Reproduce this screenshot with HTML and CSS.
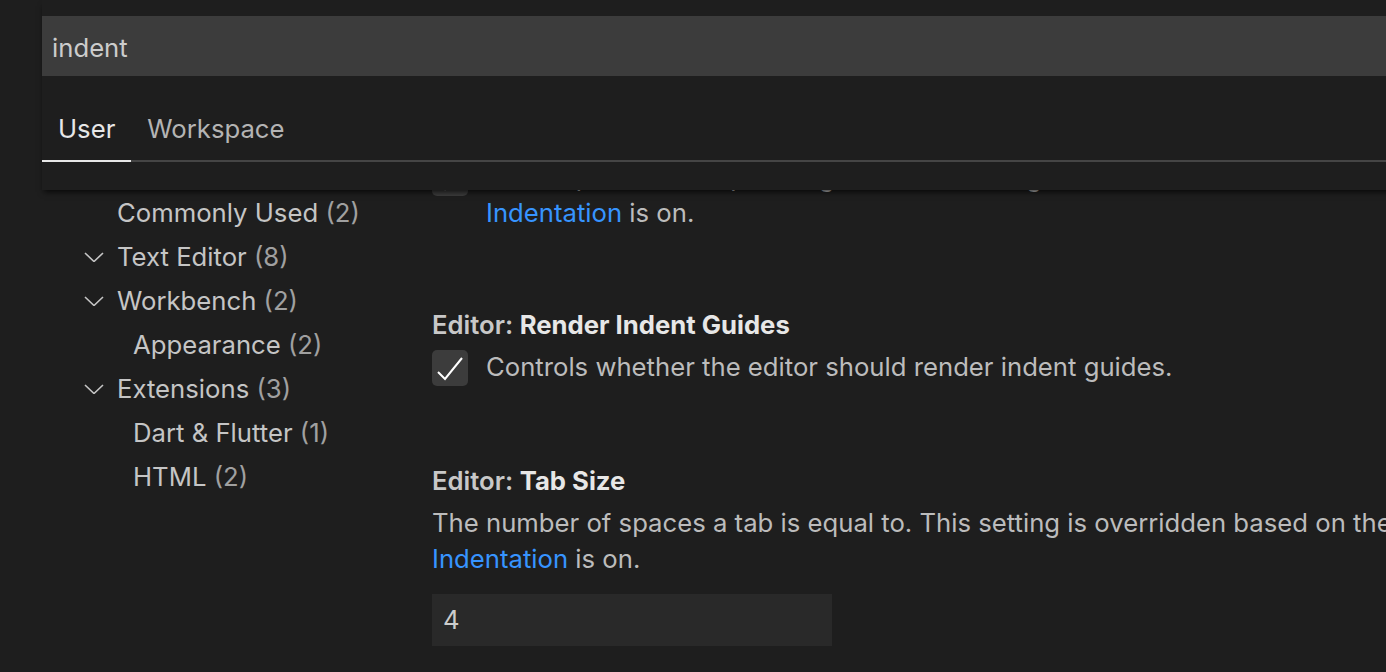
FILE: index.html
```html
<!DOCTYPE html>
<html lang="en">
  <head>
    <meta charset="UTF-8" />
    <meta name="viewport" content="width=device-width, initial-scale=1.0" />
    <title>Settings</title>
    <link rel="stylesheet" href="styles.css">
  </head>
  <body>
    <div class="settings">
      <div class="header">
        <div class="search">indent</div>
        <div class="tabs">
          <span class="tab active">User</span>
          <span class="tab">Workspace</span>
        </div>
      </div>

      <div class="body">
        <nav class="toc">
          <div class="toc-row lvl0">
            <span class="label">Commonly Used <span class="count">(2)</span></span>
          </div>
          <div class="toc-row lvl1">
            <svg class="chevron" viewBox="0 0 20 10"><path d="M1 1 L10 9.5 L19 1" /></svg>
            <span class="label">Text Editor <span class="count">(8)</span></span>
          </div>
          <div class="toc-row lvl1">
            <svg class="chevron" viewBox="0 0 20 10"><path d="M1 1 L10 9.5 L19 1" /></svg>
            <span class="label">Workbench <span class="count">(2)</span></span>
          </div>
          <div class="toc-row lvl2">
            <span class="label">Appearance <span class="count">(2)</span></span>
          </div>
          <div class="toc-row lvl1">
            <svg class="chevron" viewBox="0 0 20 10"><path d="M1 1 L10 9.5 L19 1" /></svg>
            <span class="label">Extensions <span class="count">(3)</span></span>
          </div>
          <div class="toc-row lvl2">
            <span class="label">Dart &amp; Flutter <span class="count">(1)</span></span>
          </div>
          <div class="toc-row lvl2">
            <span class="label">HTML <span class="count">(2)</span></span>
          </div>
        </nav>

        <div class="list">
          <div class="list-inner">
            <div class="item first">
              <div class="title"><span class="cat">Editor: </span>Insert Spaces</div>
              <div class="check-row">
                <span class="checkbox">
                  <svg viewBox="0 0 36 36"><path d="M6 22 L13 29 L30 8" /></svg>
                </span>
                <div class="desc">
                  Insert spaces when pressing <code>Tab</code>. This setting is overridden based on the file contents when <a href="#">Editor: Detect</a><br><a href="#">Indentation</a> is on.
                </div>
              </div>
            </div>

            <div class="item">
              <div class="title"><span class="cat">Editor: </span>Render Indent Guides</div>
              <div class="check-row">
                <span class="checkbox">
                  <svg viewBox="0 0 36 36"><path d="M6 22 L13 29 L30 8" /></svg>
                </span>
                <div class="desc">Controls whether the editor should render indent guides.</div>
              </div>
            </div>

            <div class="item">
              <div class="title"><span class="cat">Editor: </span>Tab Size</div>
              <div class="desc">
                The number of spaces a tab is equal to. This setting is overridden based on the file contents when <a href="#">Editor: Detect</a><br><a href="#">Indentation</a> is on.
              </div>
              <div class="number-input">4</div>
            </div>
          </div>
        </div>
      </div>
    </div>
  </body>
</html>
```

FILE: styles.css
```css
* {
  margin: 0;
  padding: 0;
  box-sizing: border-box;
}

html,
body {
  height: 100%;
  overflow: hidden;
}

body {
  font-family: Inter, "Noto Sans", "DejaVu Sans", sans-serif;
  font-size: 25.7px;
  background: #1e1e1e;
  color: #cccccc;
}

.settings {
  width: 1900px;
  height: 100%;
  padding-left: 42px;
  display: flex;
  flex-direction: column;
}

/* Header: search + scope tabs */
.header {
  position: relative;
  z-index: 2;
  background: #1e1e1e;
  padding-top: 16px;
  height: 190px;
  box-shadow: 0 4px 6px -2px rgba(0, 0, 0, 0.75);
}

.search {
  height: 60px;
  line-height: 60px;
  padding: 2px 0 0 10px;
  background: #3c3c3c;
  color: #cccccc;
}

.tabs {
  display: flex;
  border-bottom: 2px solid #454545;
}

.tab {
  padding: 35px 16px 13px;
  line-height: 36px;
  color: #b4b4b4;
  margin-bottom: -2px;
  border-bottom: 2px solid transparent;
}

.tab.active {
  color: #e7e7e7;
  border-bottom-color: #e7e7e7;
}

/* Body */
.body {
  flex: 1;
  display: flex;
  overflow: hidden;
}

.toc {
  width: 390px;
  flex-shrink: 0;
  padding-top: 1px;
}

.toc-row {
  height: 44px;
  line-height: 44px;
  display: flex;
  align-items: center;
  white-space: nowrap;
  color: #c5c5c5;
}

.toc-row .count {
  color: #a0a0a0;
}

.lvl0 {
  padding-left: 75px;
}

.lvl1 {
  padding-left: 42px;
}

.lvl2 {
  padding-left: 91px;
}

.chevron {
  width: 20px;
  height: 10px;
  flex-shrink: 0;
  margin-right: 13px;
  fill: none;
  stroke: #c5c5c5;
  stroke-width: 1.6;
}

.list {
  flex: 1;
  overflow: hidden;
}

/* list is scrolled: first item sits partly under the header */
.list-inner {
  margin-top: -114px;
}

.item {
  padding: 41px 0 36px;
}

.item.first {
  padding-bottom: 35px;
}

.title {
  line-height: 36px;
  font-weight: 700;
  color: #e7e7e7;
  margin-bottom: 6px;
}

.title .cat {
  font-weight: 600;
  color: #c8c8c8;
}

.desc {
  line-height: 36px;
  color: #bcbcbc;
}

.desc a {
  color: #3794ff;
  text-decoration: none;
}

.desc code {
  font-family: inherit;
}

.check-row {
  display: flex;
  align-items: flex-start;
}

.checkbox {
  width: 36px;
  height: 36px;
  flex-shrink: 0;
  margin-top: 1px;
  margin-right: 18px;
  border-radius: 5px;
  background: #3c3c3c;
}

.checkbox svg {
  display: block;
  width: 36px;
  height: 36px;
  fill: none;
  stroke: #ffffff;
  stroke-width: 2;
}

.number-input {
  width: 400px;
  height: 52px;
  line-height: 52px;
  margin-top: 17px;
  padding-left: 11px;
  background: #292929;
  color: #cccccc;
}
```
